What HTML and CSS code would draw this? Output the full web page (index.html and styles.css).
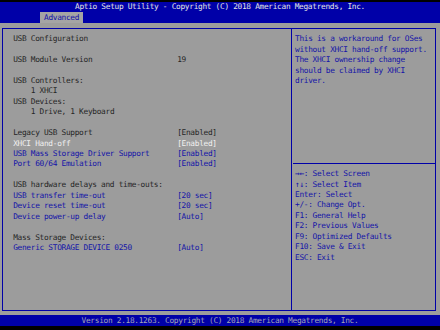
FILE: index.html
```html
<!DOCTYPE html>
<html lang="en">
  <head>
    <meta charset="UTF-8" />
    <title>Aptio Setup Utility</title>
    <link rel="stylesheet" href="styles.css">
  </head>
  <body>
    <div class="header">
      <div class="title">Aptio Setup Utility - Copyright (C) 2018 American Megatrends, Inc.</div>
      <div class="tabs"><span class="tab">Advanced</span></div>
    </div>

    <div class="main">
      <div class="box">
        <!-- settings list -->
        <div class="settings">
          <div class="row">USB Configuration</div>
          <div class="row"></div>
          <div class="row"><span class="label">USB Module Version</span><span>19</span></div>
          <div class="row"></div>
          <div class="row">USB Controllers:</div>
          <div class="row indent">1 XHCI</div>
          <div class="row">USB Devices:</div>
          <div class="row indent">1 Drive, 1 Keyboard</div>
          <div class="row"></div>
          <div class="row"><span class="label">Legacy USB Support</span><span>[Enabled]</span></div>
          <div class="row selected"><span class="label">XHCI Hand-off</span><span>[Enabled]</span></div>
          <div class="row option"><span class="label">USB Mass Storage Driver Support</span><span>[Enabled]</span></div>
          <div class="row option"><span class="label">Port 60/64 Emulation</span><span>[Enabled]</span></div>
          <div class="row"></div>
          <div class="row">USB hardware delays and time-outs:</div>
          <div class="row option"><span class="label">USB transfer time-out</span><span>[20 sec]</span></div>
          <div class="row option"><span class="label">Device reset time-out</span><span>[20 sec]</span></div>
          <div class="row option"><span class="label">Device power-up delay</span><span>[Auto]</span></div>
          <div class="row"></div>
          <div class="row">Mass Storage Devices:</div>
          <div class="row option"><span class="label">Generic STORAGE DEVICE 0250</span><span>[Auto]</span></div>
        </div>

        <!-- help panel -->
        <div class="side">
          <div class="help">
            <div class="row">This is a workaround for OSes</div>
            <div class="row">without XHCI hand-off support.</div>
            <div class="row">The XHCI ownership change</div>
            <div class="row">should be claimed by XHCI</div>
            <div class="row">driver.</div>
          </div>
          <div class="keys">
            <div class="row">→←: Select Screen</div>
            <div class="row">↑↓: Select Item</div>
            <div class="row">Enter: Select</div>
            <div class="row">+/-: Change Opt.</div>
            <div class="row">F1: General Help</div>
            <div class="row">F2: Previous Values</div>
            <div class="row">F9: Optimized Defaults</div>
            <div class="row">F10: Save &amp; Exit</div>
            <div class="row">ESC: Exit</div>
          </div>
        </div>
      </div>
    </div>

    <div class="footer">Version 2.18.1263. Copyright (C) 2018 American Megatrends, Inc.</div>
  </body>
</html>
```

FILE: styles.css
```css
/* BIOS setup screen, 100 x 31 text cells */
body {
  margin: 0;
  padding-top: 2px;
  width: 440px;
  height: 330px;
  box-sizing: border-box;
  background: #000;
  font-family: "DejaVu Sans Mono", "Liberation Mono", monospace;
  font-size: 7.8px;
  letter-spacing: -0.3px;
  line-height: 10.45px;
  overflow: hidden;
}

.row {
  height: 10.45px;
  display: flex;
  white-space: pre;
}

.header {
  background: #0000a8;
}

.title {
  height: 10.45px;
  text-align: center;
  color: #e4e4e4;
}

.tabs {
  height: 10.45px;
  padding-left: 40px;
}

.tab {
  display: inline-block;
  height: 10.45px;
  padding: 1px 4px 0 4px;
  box-sizing: border-box;
  background: #a4a4a4;
  color: #1010a8;
  vertical-align: top;
}

.main {
  background: #9c9c9c;
  height: 292.6px;
  box-sizing: border-box;
  padding: 5px 4px 0 2px;
}

.box {
  display: flex;
  height: 283px;
  border: 1px solid #0000a8;
  box-sizing: border-box;
  color: #262626;
}

.settings {
  width: 289px;
  border-right: 1px solid #0000a8;
  padding: 5.35px 0 0 10.2px;
  box-sizing: border-box;
}

.label {
  width: 164px;
}

.indent {
  padding-left: 17.6px;
}

.option {
  color: #1414a8;
}

.selected {
  color: #f0f0f0;
}

.side {
  flex: 1;
  color: #1414a8;
}

.help {
  height: 135px;
  box-sizing: border-box;
  padding: 5.35px 0 0 2px;
  margin-left: 1px;
  border-bottom: 1px solid #0000a8;
}

.keys {
  padding: 5.2px 0 0 3px;
}

.footer {
  height: 10.45px;
  padding-top: 0.5px;
  box-sizing: border-box;
  background: #0000a8;
  color: #a4a4b4;
  text-align: center;
}
```
